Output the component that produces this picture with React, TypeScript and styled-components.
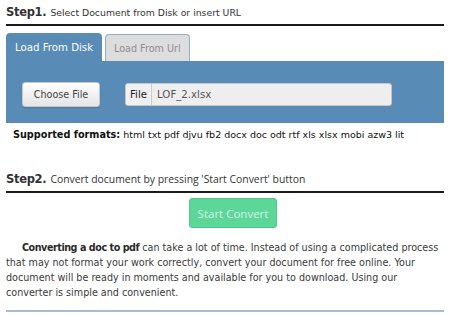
import React from "react"
import styled, { createGlobalStyle } from "styled-components"

const GlobalStyle = createGlobalStyle`
  body {
    margin: 0;
    background: #ffffff;
    font-family: "DejaVu Sans", Verdana, sans-serif;
    color: #222222;
  }
`

const Page = styled.div`
  width: 438px;
  padding: 0 6px;
`

const StepHeading = styled.div`
  display: flex;
  align-items: baseline;
  gap: 4px;
  padding: 5px 0 5px;
  border-bottom: 2px solid #1a1a1a;
  color: #333333;
  font-family: ${(props) =>
    props.$open ? `"Open Sans", sans-serif` : `"DejaVu Sans", sans-serif`};
  font-size: ${(props) => (props.$open ? "10.4px" : "9.3px")};
`

const StepLabel = styled.b`
  font-family: "DejaVu Sans", Verdana, sans-serif;
  font-size: 11.5px;
  letter-spacing: -0.3px;
  color: #333333;
`

const TabRow = styled.div`
  display: flex;
  align-items: flex-end;
  gap: 3px;
  margin-top: 7px;
`

const Tab = styled.div`
  box-sizing: border-box;
  height: ${(props) => (props.$active ? "28px" : "27px")};
  padding: ${(props) => (props.$active ? "0 9px" : "0 8px")};
  display: flex;
  align-items: center;
  border-radius: 4px 4px 0 0;
  font-size: ${(props) => (props.$active ? "10.2px" : "9.6px")};
  background: ${(props) => (props.$active ? "#588bb5" : "#dddddd")};
  color: ${(props) => (props.$active ? "#ffffff" : "#8e8e8e")};
  border: ${(props) => (props.$active ? "none" : "1px solid #8fb0cd")};
  border-bottom: none;
`

const Panel = styled.div`
  height: 62px;
  background: #588bb5;
  display: flex;
  align-items: center;
  padding: 4px 16px 0;
  box-sizing: border-box;
`

const ChooseButton = styled.button`
  width: 78px;
  height: 25px;
  border: 1px solid #c8c8c8;
  border-radius: 3px;
  background: linear-gradient(#ffffff, #e4e4e4);
  font-family: "DejaVu Sans", sans-serif;
  font-size: 9.6px;
  color: #444444;
  padding: 0;
  box-shadow: 0 1px 1px rgba(0, 0, 0, 0.15);
`

const InputGroup = styled.div`
  display: flex;
  margin-left: 25px;
  width: 267px;
  height: 23px;
  border-radius: 3px;
  overflow: hidden;
  background: #eeeeee;
  border: 1px solid #c6c6c6;
  box-sizing: border-box;
`

const Addon = styled.span`
  display: flex;
  align-items: center;
  padding: 0 4px;
  font-size: 10.2px;
  color: #222222;
  background: #f0f0f0;
  border-right: 1px solid #cccccc;
`

const FileName = styled.span`
  display: flex;
  align-items: center;
  padding: 0 5px;
  font-size: 10.2px;
  color: #555555;
`

const Formats = styled.div`
  margin: 6px 0 0 7px;
  font-size: 9.5px;
  color: #111111;

  b {
    font-size: 9.7px;
  }
`

const Step2 = styled(StepHeading)`
  margin-top: 27px;
`

const ConvertRow = styled.div`
  padding: 5px 0 0 183px;
`

const ConvertButton = styled.button`
  width: 88px;
  height: 30px;
  border: 1px solid #4cc98a;
  border-radius: 3px;
  background: #5dd69a;
  color: #d2f5e2;
  font-family: "Open Sans", sans-serif;
  font-size: 11.5px;
  padding: 0;
`

const Text = styled.p`
  margin: 12px 0 0;
  padding-bottom: 10px;
  border-bottom: 2px solid #a9bdd1;
  font-size: 9.6px;
  line-height: 15px;
  text-indent: 16px;
  color: #3a3a3a;

  b {
    color: #2a2a2a;
    letter-spacing: -0.45px;
  }
`

const formats = "html txt pdf djvu fb2 docx doc odt rtf xls xlsx mobi azw3 lit"

export default function App() {
  return (
    <Page>
      <GlobalStyle />
      <StepHeading>
        <StepLabel>Step1.</StepLabel>
        <span>Select Document from Disk or insert URL</span>
      </StepHeading>
      <TabRow>
        <Tab $active>Load From Disk</Tab>
        <Tab>Load From Url</Tab>
      </TabRow>
      <Panel>
        <ChooseButton>Choose File</ChooseButton>
        <InputGroup>
          <Addon>File</Addon>
          <FileName>LOF_2.xlsx</FileName>
        </InputGroup>
      </Panel>
      <Formats>
        <b>Supported formats:</b> {formats}
      </Formats>
      <Step2 $open>
        <StepLabel>Step2.</StepLabel>
        <span>Convert document by pressing 'Start Convert' button</span>
      </Step2>
      <ConvertRow>
        <ConvertButton>Start Convert</ConvertButton>
      </ConvertRow>
      <Text>
        <b>Converting a doc to pdf</b> can take a lot of time. Instead of using a
        complicated process that may not format your work correctly, convert your
        document for free online. Your document will be ready in moments and
        available for you to download. Using our converter is simple and
        convenient.
      </Text>
    </Page>
  )
}
